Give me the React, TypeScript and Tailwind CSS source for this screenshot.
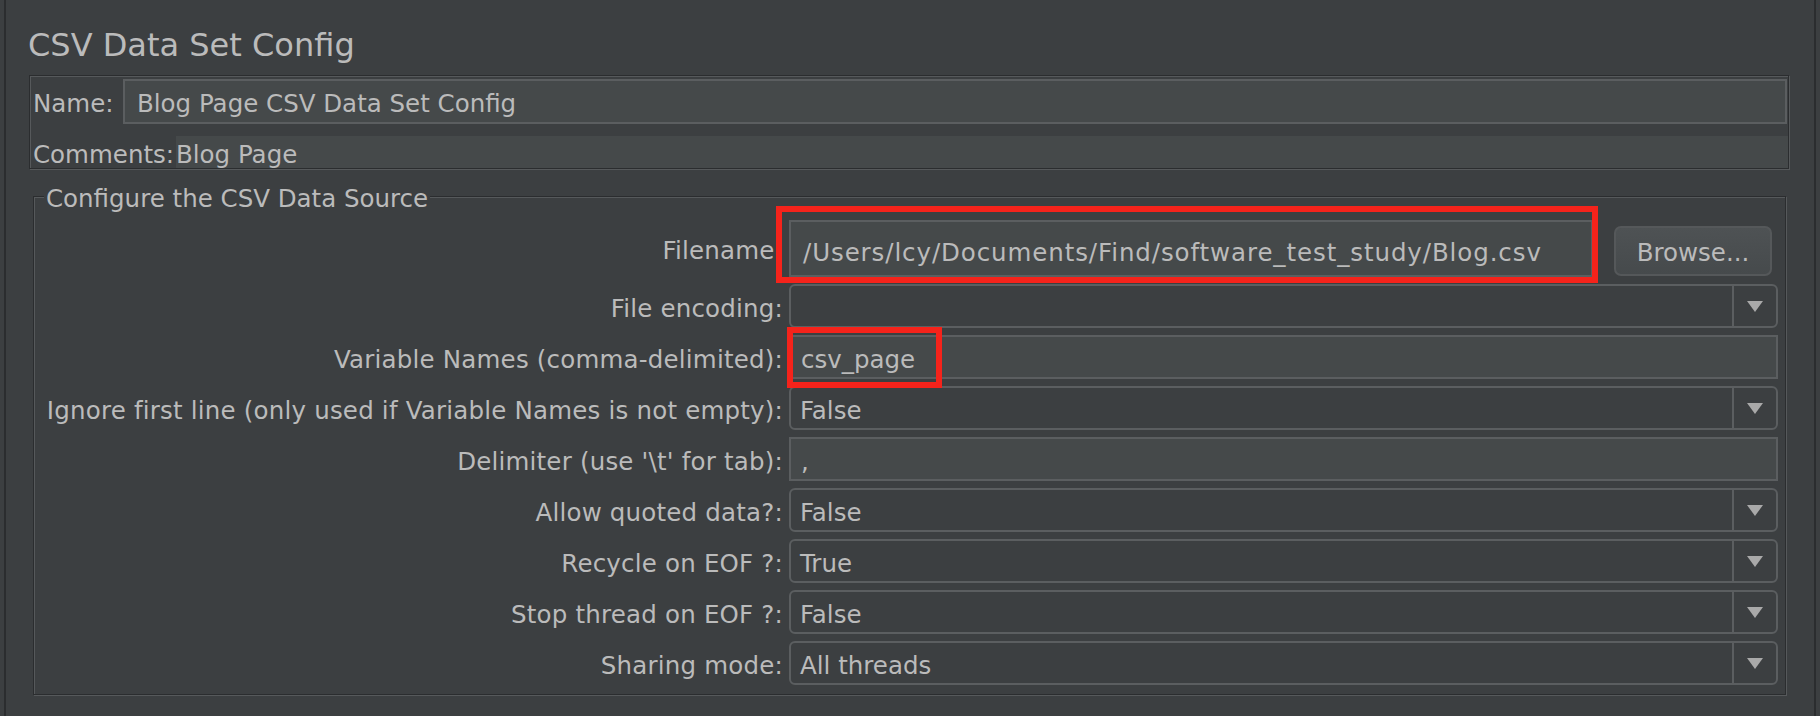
import React from 'react';

const Arrow = () => (
  <svg width="16" height="11" viewBox="0 0 16 11">
    <path d="M0 0H16L8 11Z" fill="#a9a9a9" />
  </svg>
);

function Combo({ value }: { value: string }) {
  return (
    <div className="flex h-[44px] rounded-[6px] border-2 border-[#5b5e60] bg-[#3c3f41]">
      <div className="flex flex-1 items-center pl-[9px] pt-[5px]">{value}</div>
      <div className="flex w-[44px] items-center justify-center border-l-2 border-[#5b5e60]">
        <Arrow />
      </div>
    </div>
  );
}

function Field({ value }: { value: string }) {
  return (
    <div className="flex h-[44px] items-center border-2 border-[#5b5e60] bg-[#45494a] pl-[10px] pt-[5px]">
      {value}
    </div>
  );
}

function Label({ text }: { text: string }) {
  return <div className="flex items-center justify-end whitespace-nowrap pt-[5px] tracking-[0.2px]">{text}</div>;
}

const rows: { label: string; value: string; combo: boolean }[] = [
  { label: 'File encoding:', value: '', combo: true },
  { label: 'Variable Names (comma-delimited):', value: 'csv_page', combo: false },
  { label: 'Ignore first line (only used if Variable Names is not empty):', value: 'False', combo: true },
  { label: "Delimiter (use '\\t' for tab):", value: ',', combo: false },
  { label: 'Allow quoted data?:', value: 'False', combo: true },
  { label: 'Recycle on EOF ?:', value: 'True', combo: true },
  { label: 'Stop thread on EOF ?:', value: 'False', combo: true },
  { label: 'Sharing mode:', value: 'All threads', combo: true },
];

export default function App() {
  return (
    <div className="relative h-[716px] w-[1820px] overflow-hidden bg-[#3c3f41] font-['DejaVu_Sans',sans-serif] text-[24.5px] leading-[28px] text-[#bbbbbb]">
      <div className="ml-[4px] mr-[4px] flex h-full flex-col border-x-2 border-[#2b2d2f]">
        <div className="ml-[22px] mt-[26px] text-[32px] leading-[38px]">CSV Data Set Config</div>

        {/* name / comments */}
        <div className="ml-[23px] mr-[25px] mt-[11px] border border-[#2b2d2f] pl-[3px] pt-[3px] shadow-[inset_1px_1px_0_#56595b,1px_1px_0_#56595b]">
          <div className="flex h-[45px] pr-[1px]">
            <div className="flex w-[90px] items-center pt-[5px]">Name:</div>
            <div className="flex flex-1 items-center border-2 border-[#5b5e60] bg-[#45494a] pl-[12px] pt-[5px]">
              Blog Page CSV Data Set Config
            </div>
          </div>
          <div className="mt-[12px] flex h-[32px]">
            <div className="flex w-[143px] items-center pt-[5px]">Comments:</div>
            <div className="flex flex-1 items-center bg-[#45494a] pt-[5px]">Blog Page</div>
          </div>
        </div>

        <fieldset className="ml-[27px] mr-[28px] mt-[11px] border border-[#2b2d2f] pb-[9px] pr-[7px] pt-[7px] shadow-[inset_1px_1px_0_#56595b,1px_1px_0_#56595b]">
          <legend className="ml-[10px] bg-[#3c3f41] px-[2px] pt-[5px] leading-[28px]">Configure the CSV Data Source</legend>
          <div className="grid grid-cols-[749px_1fr] gap-x-[6px] gap-y-[7px]">
            <Label text="Filename:" />
            <div className="flex h-[57px]">
              <div className="flex flex-1 items-center border-2 border-[#5b5e60] bg-[#45494a] pl-[12px] pt-[9px] tracking-[0.9px]">
                /Users/lcy/Documents/Find/software_test_study/Blog.csv
              </div>
              <button className="ml-[21px] mr-[6px] mt-[6px] h-[50px] w-[158px] rounded-[7px] border-2 border-[#55585a] bg-gradient-to-b from-[#4e5254] to-[#464a4c] pt-[3px] text-[#bbbbbb]">
                Browse...
              </button>
            </div>
            {rows.map((r) => (
              <React.Fragment key={r.label}>
                <Label text={r.label} />
                {r.combo ? <Combo value={r.value} /> : <Field value={r.value} />}
              </React.Fragment>
            ))}
          </div>
        </fieldset>
      </div>

      {/* annotation boxes */}
      <div className="absolute left-[776px] top-[206px] h-[77px] w-[822px] border-[6px] border-[#f5231b]" />
      <div className="absolute left-[787px] top-[327px] h-[61px] w-[155px] border-[6px] border-[#f5231b]" />
    </div>
  );
}
